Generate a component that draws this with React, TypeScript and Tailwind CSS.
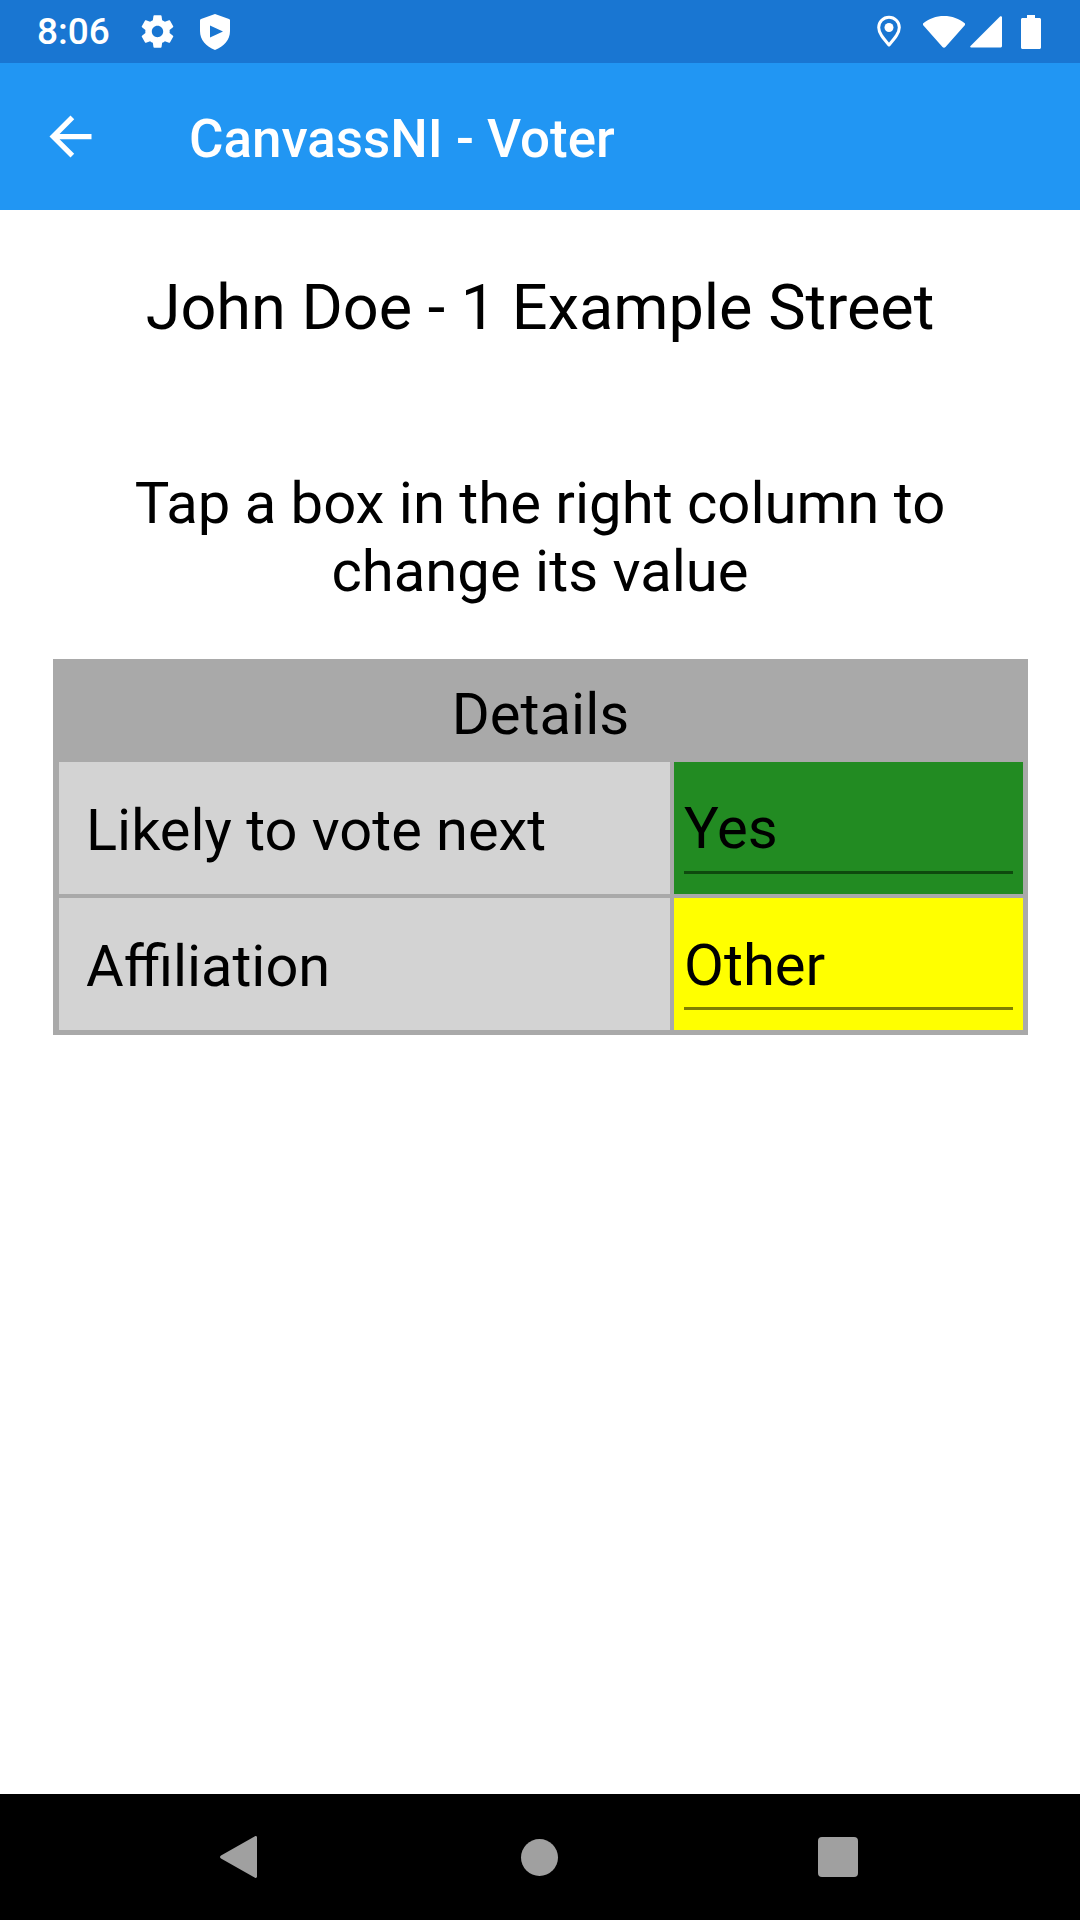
const roboto = "font-['Roboto',sans-serif]";

function GearIcon() {
  return (
    <svg viewBox="0 0 24 24" fill="#fff" className="w-[39px] h-[39px]">
      <path d="M19.43 12.98c.04-.32.07-.64.07-.98s-.03-.66-.07-.98l2.11-1.65c.19-.15.24-.42.12-.64l-2-3.46c-.12-.22-.39-.3-.61-.22l-2.49 1c-.52-.4-1.08-.73-1.69-.98l-.38-2.65C14.46 2.18 14.25 2 14 2h-4c-.25 0-.46.18-.49.42l-.38 2.65c-.61.25-1.17.59-1.69.98l-2.49-1c-.23-.09-.49 0-.61.22l-2 3.46c-.13.22-.07.49.12.64l2.11 1.65c-.04.32-.07.65-.07.98s.03.66.07.98l-2.11 1.65c-.19.15-.24.42-.12.64l2 3.46c.12.22.39.3.61.22l2.49-1c.52.4 1.08.73 1.69.98l.38 2.65c.03.24.24.42.49.42h4c.25 0 .46-.18.49-.42l.38-2.65c.61-.25 1.17-.59 1.69-.98l2.49 1c.23.09.49 0 .61-.22l2-3.46c.12-.22.07-.49-.12-.64l-2.11-1.65zM12 15.5c-1.93 0-3.5-1.57-3.5-3.5s1.57-3.5 3.5-3.5 3.5 1.57 3.5 3.5-1.57 3.5-3.5 3.5z" />
    </svg>
  );
}

function ShieldPlayIcon() {
  return (
    <svg viewBox="0 0 30 36" className="w-[30px] h-[36px]">
      <path
        fill="#fff"
        d="M15 0L29 5c.6.2 1 .8 1 1.400V17c0 9-6 15.500-15 19C6 32.500 0 26 0 17V6.400C0 5.800.4 5.200 1 5z"
      />
      <path fill="#1976D2" d="M10 11.500L23 17.500L10 23.500z" />
    </svg>
  );
}

function BackArrow() {
  return (
    <svg viewBox="0 0 24 24" fill="#fff" className="w-[63px] h-[63px]">
      <path d="M20 11H7.830l5.590-5.590L12 4l-8 8 8 8 1.410-1.410L7.830 13H20v-2z" />
    </svg>
  );
}

function LocationIcon() {
  return (
    <svg viewBox="0 0 24 32" className="w-[24px] h-[33px]" fill="none">
      <path
        stroke="#fff"
        strokeWidth="3"
        strokeLinejoin="round"
        d="M12 29.500C6 22.500 1.700 17.500 1.700 12C1.700 6.300 6.300 1.700 12 1.700S22.300 6.300 22.300 12C22.300 17.500 18 22.500 12 29.500z"
      />
      <circle cx="12" cy="12" r="4.500" fill="#fff" />
    </svg>
  );
}

function WifiIcon() {
  return (
    <svg viewBox="0 0 42 32" className="w-[42px] h-[32px]">
      <path fill="#fff" d="M21 0C13 0 6 2.500 0 7.500c-.5.500-.5 1 0 1.500L19.500 31c.8.900 2.200.900 3 0L42 9c.5-.5.500-1 0-1.500C36 2.500 29 0 21 0z" />
    </svg>
  );
}

function SignalIcon() {
  return (
    <svg viewBox="0 0 32 32" className="w-[32px] h-[32px]">
      <path fill="#fff" d="M30 .500L.500 30c-.6.700-.2 1.500.6 1.500H30c1.100 0 2-.5 2-1.500V1.500C32 .300 30.800-.3 30 .500z" />
    </svg>
  );
}

function BatteryIcon() {
  return (
    <svg viewBox="0 0 20 34" className="w-[20px] h-[34px]">
      <path fill="#fff" d="M6 0h8v3h4.500c.8 0 1.500.7 1.500 1.500V32.500c0 .8-.7 1.500-1.500 1.500H1.500C.7 34 0 33.300 0 32.500V4.500C0 3.700.7 3 1.500 3H6z" />
    </svg>
  );
}

function StatusBar() {
  return (
    <div className="h-[63px] bg-[#1976D2] flex items-center pl-[37px] pr-[39px] shrink-0">
      <span className="text-[37px] font-medium leading-none text-white">8:06</span>
      <div className="flex items-center gap-[23px] ml-[28px]">
        <GearIcon />
        <ShieldPlayIcon />
      </div>
      <div className="flex items-center ml-auto">
        <LocationIcon />
        <div className="ml-[22px]"><WifiIcon /></div>
        <div className="ml-[5px]"><SignalIcon /></div>
        <div className="ml-[19px]"><BatteryIcon /></div>
      </div>
    </div>
  );
}

function AppBar() {
  return (
    <div className="h-[147px] bg-[#2196F3] flex items-center shrink-0 pl-[39px]">
      <BackArrow />
      <h1 className="ml-[87px] pt-[6px] text-[52.9px] font-medium text-white leading-none">CanvassNI - Voter</h1>
    </div>
  );
}

function ValueCell({ value, color, line, top, gap }: { value: string; color: string; line: string; top: string; gap: string }) {
  return (
    <div className={`${color} px-[10px] h-[132px] flex flex-col`}>
      <span className={`text-[58px] leading-none text-black ${top}`}>{value}</span>
      <div className={`${line} h-[3px] ${gap}`} />
    </div>
  );
}

function LabelCell({ label }: { label: string }) {
  return (
    <div className="bg-[#D3D3D3] h-[132px] flex items-center pl-[27px] pt-[6px]">
      <span className="text-[57.75px] leading-none text-black">{label}</span>
    </div>
  );
}

function DetailsTable() {
  return (
    <div className="bg-[#A9A9A9] ml-[53px] mr-[52px] mt-[54px] pb-[5px]">
      <div className="h-[103px] flex items-center justify-center pt-[7px] text-[58px] leading-none text-black">Details</div>
      <div className="grid grid-cols-[611px_349px] gap-[4px] px-[6px]">
        <LabelCell label="Likely to vote next" />
        <ValueCell value="Yes" color="bg-[#228B22]" line="bg-[#0E4A0E]" top="mt-[37px]" gap="mt-[14px]" />
        <LabelCell label="Affiliation" />
        <ValueCell value="Other" color="bg-[#FFFF00]" line="bg-[#807F00]" top="mt-[38px]" gap="mt-[13px]" />
      </div>
    </div>
  );
}

function NavBar() {
  return (
    <div className="h-[126px] bg-black shrink-0 flex items-center">
      <svg viewBox="0 0 37 42" className="w-[37px] h-[42px] ml-[220px]">
        <path fill="#A0A0A0" d="M35 .300c1-.6 2 0 2 1.200v39c0 1.200-1 1.800-2 1.200L1 22.600c-1.300-.8-1.300-2.400 0-3.200z" />
      </svg>
      <div className="w-[37px] h-[37px] rounded-full bg-[#A0A0A0] ml-[264px]" />
      <div className="w-[40px] h-[40px] rounded-[4px] bg-[#A0A0A0] ml-[260px]" />
    </div>
  );
}

export default function App() {
  return (
    <div className={`${roboto} w-[1080px] h-[1920px] flex flex-col bg-white overflow-hidden`}>
      <StatusBar />
      <AppBar />
      <main className="flex-1">
        <p className="text-[63px] leading-none text-black text-center mt-[66px]">John Doe - 1 Example Street</p>
        <p className="text-[58px] leading-[68px] text-black text-center mt-[130px] px-[53px]">
          Tap a box in the right column to change its value
        </p>
        <DetailsTable />
      </main>
      <NavBar />
    </div>
  );
}
